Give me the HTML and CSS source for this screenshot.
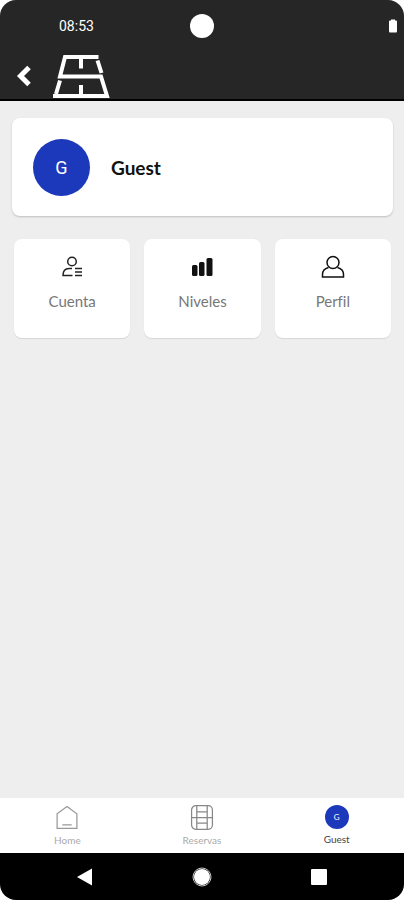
FILE: index.html
```html
<!DOCTYPE html>
<html lang="es">
<head>
  <meta charset="UTF-8" />
  <meta name="viewport" content="width=device-width, initial-scale=1" />
  <title>Guest</title>
  <link rel="stylesheet" href="styles.css">
</head>
<body>
  <div class="phone">
    <div class="status-bar">
      <span class="clock">08:53</span>
      <span class="camera"></span>
      <svg class="battery" viewBox="0 0 10 14" aria-hidden="true"><path d="M1 2.500Q1 1.500 2 1.500H3V0.500H7V1.500H8Q9 1.500 9 2.500V12Q9 13.500 8 13.500H2Q1 13.500 1 12Z" fill="#fff"/></svg>
    </div>

    <header class="app-bar">
      <button class="back" type="button" aria-label="Volver">
        <svg viewBox="0 0 16 22" aria-hidden="true"><path d="M13 2.500L4.500 11L13 19.500" fill="none" stroke="#fff" stroke-width="5"/></svg>
      </button>
      <svg class="logo" viewBox="0 0 58 44" aria-hidden="true">
        <g fill="none" stroke="#fff" stroke-width="4">
          <path d="M46.500 3H13L8 22.500H49L55 42H1"/>
          <path d="M29 3V14.500M29 31V42M45.500 6.500L49.500 19M8 26.500L4 40"/>
        </g>
      </svg>
    </header>

    <main class="content">
      <section class="profile-card">
        <span class="avatar">G</span>
        <h1 class="name">Guest</h1>
      </section>

      <nav class="options">
        <a class="option" href="#cuenta">
          <svg viewBox="0 0 24 24" aria-hidden="true">
            <g fill="none" stroke="#222" stroke-width="1.500">
              <circle cx="12" cy="6.500" r="4.300"/>
              <path d="M12 13.500H9C5.500 13.500 3 16 3 20.500H12.500M15 13.500H22M15 17H22M15 20.500H22"/>
            </g>
          </svg>
          <span>Cuenta</span>
        </a>
        <a class="option" href="#niveles">
          <svg viewBox="0 0 24 24" aria-hidden="true">
            <g fill="#111">
              <rect x="2" y="10" width="5.500" height="11" rx="1.500"/>
              <rect x="9" y="7" width="5.500" height="14" rx="1.500"/>
              <rect x="16.500" y="3" width="6" height="18" rx="1.500"/>
            </g>
          </svg>
          <span>Niveles</span>
        </a>
        <a class="option" href="#perfil">
          <svg viewBox="0 0 24 24" aria-hidden="true">
            <g fill="none" stroke="#111" stroke-width="1.500">
              <circle cx="12" cy="7.500" r="6"/>
              <path d="M7.500 12.500C4 13.500 1.500 16 1.500 19.500V22H22.500V19.500C22.500 16 20 13.500 16.500 12.500"/>
            </g>
          </svg>
          <span>Perfil</span>
        </a>
      </nav>
    </main>

    <nav class="tab-bar">
      <a class="tab" href="#home">
        <svg viewBox="0 0 24 24" aria-hidden="true">
          <path d="M2.500 22.500V8.500L12 1.500L21.500 8.500V22.500ZM7.500 19H16.500" fill="none" stroke="#999" stroke-width="1.200"/>
        </svg>
        <span>Home</span>
      </a>
      <a class="tab" href="#reservas">
        <svg viewBox="0 0 24 24" aria-hidden="true">
          <g fill="none" stroke="#888" stroke-width="1.200">
            <rect x="2" y="0.700" width="20" height="22.600" rx="4"/>
            <path d="M7 1V23M17 1V23M2 12H22M7 6.500H17M7 17.500H17"/>
          </g>
        </svg>
        <span>Reservas</span>
      </a>
      <a class="tab active" href="#guest" aria-current="page">
        <span class="avatar small">G</span>
        <span>Guest</span>
      </a>
    </nav>

    <div class="system-nav">
      <button type="button" aria-label="Atrás"><svg viewBox="0 0 20 20" aria-hidden="true"><path d="M2 10L17 1.500V18.500Z" fill="#fff"/></svg></button>
      <button type="button" aria-label="Inicio"><svg viewBox="0 0 20 20" aria-hidden="true"><circle cx="10" cy="10" r="9" fill="none" stroke="#ccc"/><circle cx="10" cy="10" r="8" fill="#fff"/></svg></button>
      <button type="button" aria-label="Recientes"><svg viewBox="0 0 20 20" aria-hidden="true"><rect x="2" y="2" width="16" height="16" rx="1" fill="#fff"/></svg></button>
    </div>
  </div>
</body>
</html>
```

FILE: styles.css
```css
* {
  box-sizing: border-box;
}

body {
  margin: 0;
  background: #fff;
  font-family: Roboto, Arial, sans-serif;
}

.phone {
  display: flex;
  flex-direction: column;
  min-height: 100vh;
  overflow: hidden;
  border-radius: 16px;
  background: #eee;
}

.status-bar {
  display: grid;
  grid-template-columns: 1fr auto 1fr;
  align-items: center;
  height: 52px;
  padding: 0 6px;
  background: #262626;
  color: #fff;
}

.clock {
  padding-left: 53px;
  font-size: 14px;
  line-height: 20px;
}

.camera {
  width: 24px;
  height: 24px;
  border-radius: 50%;
  background: #fff;
}

.battery {
  justify-self: end;
  width: 10px;
  height: 14px;
}

.app-bar {
  display: flex;
  align-items: center;
  gap: 20px;
  height: 49px;
  padding: 0 16px;
  border-bottom: 2px solid #000;
  background: #262626;
}

button {
  display: flex;
  padding: 0;
  border: none;
  background: none;
  cursor: pointer;
}

.back svg {
  width: 16px;
  height: 22px;
}

.logo {
  width: 58px;
  height: 44px;
}

.content {
  flex: 1;
  padding: 17px 11px 17px 12px;
}

.profile-card {
  display: flex;
  align-items: center;
  gap: 21px;
  height: 98px;
  padding: 0 21px;
  border-radius: 8px;
  background: #fff;
  box-shadow: 0 1px 2px rgba(0, 0, 0, 0.2);
}

.avatar {
  display: flex;
  align-items: center;
  justify-content: center;
  width: 57px;
  height: 57px;
  border-radius: 50%;
  background: #1c39bb;
  color: #fff;
  font-size: 18px;
}

.name {
  margin: 0;
  color: #111;
  font-family: Lato, sans-serif;
  font-size: 19px;
  font-weight: bold;
}

.options {
  display: grid;
  grid-template-columns: repeat(3, 1fr);
  gap: 14px;
  padding: 23px 2px 0;
}

.option {
  display: flex;
  flex-direction: column;
  align-items: center;
  gap: 13px;
  height: 99px;
  padding-top: 16px;
  border-radius: 8px;
  background: #fff;
  box-shadow: 0 1px 1px rgba(0, 0, 0, 0.1);
  color: #777;
  font-family: Lato, sans-serif;
  font-size: 15px;
  font-variant-ligatures: none;
  line-height: 18px;
  text-decoration: none;
}

.option svg {
  width: 24px;
  height: 24px;
}

.tab-bar {
  display: grid;
  grid-template-columns: repeat(3, 1fr);
  height: 55px;
  background: #fff;
}

.tab {
  display: flex;
  flex-direction: column;
  align-items: center;
  gap: 3px;
  padding-top: 7px;
  color: #aaa;
  font-family: Lato, sans-serif;
  font-size: 10px;
  line-height: 14px;
  text-decoration: none;
}

.tab svg {
  width: 26px;
  height: 25px;
}

.tab.active {
  color: #444;
}

.avatar.small {
  width: 24px;
  height: 24px;
  font-size: 8px;
}

.system-nav {
  display: flex;
  align-items: center;
  justify-content: space-between;
  height: 47px;
  padding: 0 75px;
  background: #000;
}

.system-nav svg {
  width: 20px;
  height: 20px;
}
```
